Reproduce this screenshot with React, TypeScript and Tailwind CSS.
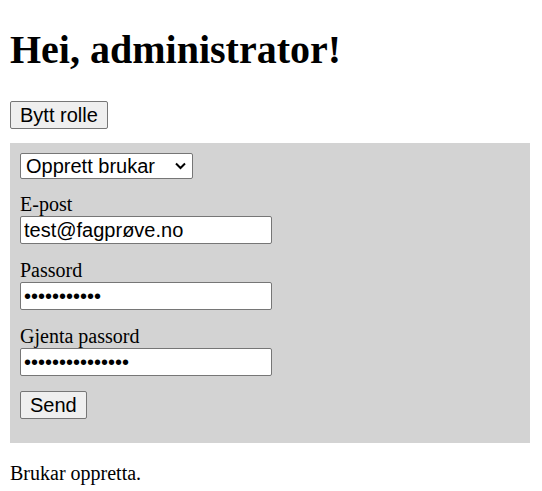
import type { ReactNode } from "react";

const serif = "font-['Liberation_Serif','Times_New_Roman',serif]";
const sans = "font-['Liberation_Sans',Arial,sans-serif]";

function Field({
  label,
  type,
  value,
  className,
}: {
  label: string;
  type: string;
  value: string;
  className: string;
}) {
  return (
    <div className={className}>
      <label className="block text-[20px] leading-[23px]">{label}</label>
      <input
        type={type}
        value={value}
        readOnly
        className={
          sans +
          " block h-[28px] w-[252px] rounded-[2px] border border-[#767676] bg-white px-[3px] text-[20px] text-black outline-none"
        }
      />
    </div>
  );
}

function Button({ children, className }: { children: ReactNode; className?: string }) {
  return (
    <button
      type="button"
      className={
        sans +
        " block h-[28px] rounded-[2px] border border-[#767676] bg-[#efefef] px-[9px] text-[20px] leading-[23px] text-black " +
        (className ?? "")
      }
    >
      {children}
    </button>
  );
}

export default function App() {
  return (
    <div className={serif + " ml-[10px] w-[520px] bg-white pb-[10px] text-black"}>
      <h1 className="pt-[27px] text-[40px] font-bold leading-[46px]">Hei, administrator!</h1>

      <Button className="mt-[28px]">Bytt rolle</Button>

      <form className="mt-[14px] bg-[#d3d3d3] px-[10px] pb-[24px] pt-[10px]">
        <div className="relative w-[173px]">
          <select
            defaultValue="opprett"
            className={
              sans +
              " block h-[26px] w-[173px] appearance-none rounded-[2px] border border-[#767676] bg-white pl-[5px] text-[20px] leading-[23px] text-black outline-none"
            }
          >
            <option value="opprett">Opprett brukar</option>
            <option value="slett">Slett brukar</option>
          </select>
          <svg
            className="pointer-events-none absolute right-[7px] top-[9px]"
            width="11"
            height="8"
            viewBox="0 0 11 8"
            fill="none"
          >
            <path d="M1 1.5l4.5 4.5 4.5-4.5" stroke="#000" strokeWidth="2" />
          </svg>
        </div>

        <Field className="mt-[14px]" label="E-post" type="text" value="test@fagprøve.no" />
        <Field className="mt-[15px]" label="Passord" type="password" value="hemmeligpas" />
        <Field className="mt-[15px]" label="Gjenta passord" type="password" value="hemmeligpassord" />

        <Button className="mt-[15px]">Send</Button>
      </form>

      <p className="mt-[19px] text-[20px] leading-[23px]">Brukar oppretta.</p>
    </div>
  );
}
